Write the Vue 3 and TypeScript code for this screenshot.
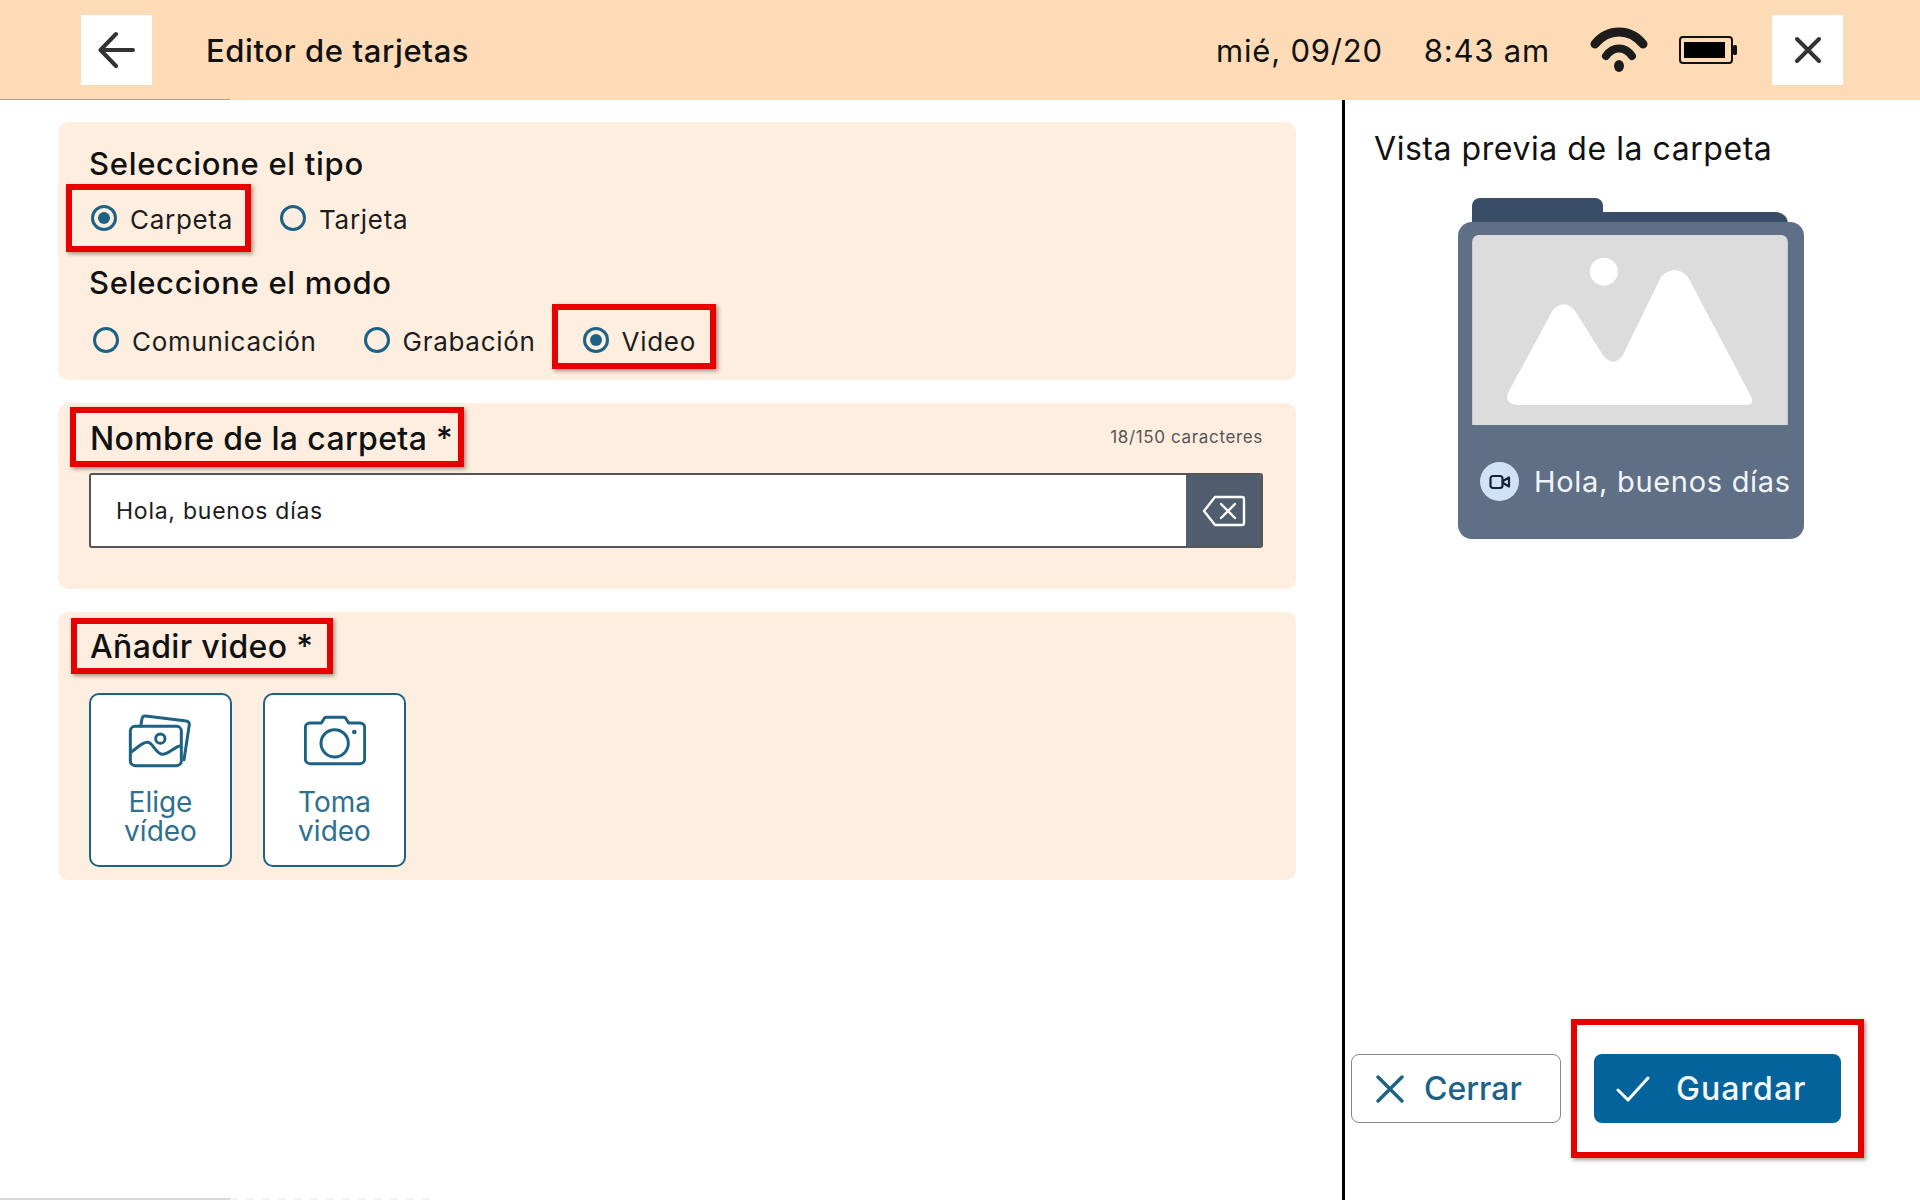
<template>
  <div class="screen">
    <header class="topbar">
      <button class="bar-btn back-btn" aria-label="Volver">
        <svg width="38" height="38" viewBox="0 0 38 38" fill="none" stroke="#333" stroke-width="4" stroke-linecap="round" stroke-linejoin="round">
          <path d="M35 19H3M18 3 2.5 19 18 35" />
        </svg>
      </button>
      <h1 class="bar-title">Editor de tarjetas</h1>
      <span class="bar-date">mié, 09/20</span>
      <span class="bar-time">8:43 am</span>
      <svg class="wifi" width="58" height="46" viewBox="0 0 58 46" fill="none" stroke="#1c1c1c" stroke-linecap="round">
        <path d="M5 17C18 1 40 1 53 17" stroke-width="9" />
        <path d="M16 29C23 19 35 19 42 29" stroke-width="8" />
        <ellipse cx="29" cy="39" rx="5" ry="6" fill="#1c1c1c" stroke="none" />
      </svg>
      <svg class="battery" width="59" height="28" viewBox="0 0 59 28">
        <rect x="1" y="1" width="52" height="26" rx="3" fill="none" stroke="#111" stroke-width="2" />
        <rect x="5" y="6" width="41" height="16" fill="#000" />
        <rect x="54" y="9" width="4" height="10" rx="1.5" fill="#111" />
      </svg>
      <button class="bar-btn close-btn" aria-label="Cerrar">
        <svg width="28" height="28" viewBox="0 0 28 28" fill="none" stroke="#333" stroke-width="4" stroke-linecap="round">
          <path d="M3 3 25 25M25 3 3 25" />
        </svg>
      </button>
    </header>

    <div class="content">
      <main class="editor">
        <section class="panel type-panel">
          <h2 class="panel-title">Seleccione el tipo</h2>
          <div class="radio-row first-row">
            <label v-for="opt in types" :key="opt.label" class="radio" :class="{ marked: opt.checked }">
              <span class="dot" :class="{ checked: opt.checked }"></span>
              <span class="radio-text">{{ opt.label }}</span>
            </label>
          </div>
          <h2 class="panel-title mode-title">Seleccione el modo</h2>
          <div class="radio-row second-row">
            <label v-for="opt in modes" :key="opt.label" class="radio" :class="{ marked: opt.checked }">
              <span class="dot" :class="{ checked: opt.checked }"></span>
              <span class="radio-text">{{ opt.label }}</span>
            </label>
          </div>
        </section>

        <section class="panel name-panel">
          <div class="name-head">
            <h2 class="field-title marked-title">Nombre de la carpeta *</h2>
            <span class="counter">18/150 caracteres</span>
          </div>
          <div class="name-input">
            <span class="input-text">Hola, buenos días</span>
            <button class="clear-btn" aria-label="Borrar">
              <svg width="44" height="32" viewBox="0 0 44 32" fill="none" stroke="#fff" stroke-width="2.4" stroke-linejoin="round" stroke-linecap="round">
                <path d="M13 2H40a2 2 0 0 1 2 2V28a2 2 0 0 1-2 2H13L2 16Z" />
                <path d="M19 9 33 23M33 9 19 23" />
              </svg>
            </button>
          </div>
        </section>

        <section class="panel video-panel">
          <h2 class="field-title marked-title video-title">Añadir video *</h2>
          <div class="tiles">
            <button class="tile">
              <svg width="65" height="55" viewBox="0 0 195 165" fill="none" stroke="#1d6283" stroke-width="9" stroke-linejoin="round" stroke-linecap="round">
                <rect x="7" y="40" width="153" height="118" rx="14" />
                <path d="M38 40 42 17a10 10 0 0 1 11-8L175 24a10 10 0 0 1 9 11L168 140" />
                <circle cx="97" cy="77" r="14" />
                <path d="M8 118C25 108 42 86 60 88 75 90 85 124 104 124 122 124 140 100 158 98" />
              </svg>
              <span class="tile-label">Elige<br />vídeo</span>
            </button>
            <button class="tile">
              <svg width="62" height="49" viewBox="0 0 186 147" fill="none" stroke="#1d6283" stroke-width="9" stroke-linejoin="round">
                <path d="M18 21H52L60 8a8 8 0 0 1 7-4H119a8 8 0 0 1 7 4L134 21H168a14 14 0 0 1 14 14V129a14 14 0 0 1-14 14H18A14 14 0 0 1 4 129V35A14 14 0 0 1 18 21Z" />
                <circle cx="92" cy="82" r="41" />
                <circle cx="151" cy="48" r="7" fill="#1d6283" stroke="none" />
              </svg>
              <span class="tile-label">Toma<br />video</span>
            </button>
          </div>
        </section>
      </main>

      <aside class="preview">
        <h2 class="preview-title">Vista previa de la carpeta</h2>
        <div class="folder">
          <div class="folder-back">
            <span class="folder-tab"></span>
          </div>
          <div class="folder-front">
            <svg class="folder-image" width="316" height="190" viewBox="398 375 947 570">
              <path d="M398 395a20 20 0 0 1 20-20H1325a20 20 0 0 1 20 20V945H398Z" fill="#dcdcdc" />
              <circle cx="793" cy="485" r="42" fill="#fff" />
              <path d="M505 850 640 600Q675 565 705 600L790 735Q822 775 850 735L965 500Q1005 460 1045 500L1235 860Q1245 885 1220 885H530Q495 880 505 850Z" fill="#fff" />
            </svg>
            <div class="folder-label">
              <span class="mode-badge">
                <svg width="22" height="16" viewBox="0 0 22 16" fill="none" stroke="#14233a" stroke-width="2.2" stroke-linejoin="round">
                  <rect x="1.5" y="2" width="12" height="12" rx="2.5" />
                  <path d="M14 7 20 3.5V12.5L14 9Z" />
                </svg>
              </span>
              <span class="folder-name">Hola, buenos días</span>
            </div>
          </div>
        </div>
        <div class="actions">
          <button class="action cancel">
            <svg width="28" height="28" viewBox="0 0 28 28" fill="none" stroke="#1b6286" stroke-width="3.4" stroke-linecap="round">
              <path d="M2 2 26 26M26 2 2 26" />
            </svg>
            Cerrar
          </button>
          <button class="action save">
            <svg class="check" width="34" height="26" viewBox="0 0 34 26" fill="none" stroke="#fff" stroke-width="3" stroke-linecap="round" stroke-linejoin="round">
              <path d="M2 14 12 24 32 2" />
            </svg>
            Guardar
          </button>
        </div>
      </aside>
    </div>

    <div class="bottom-edge">
      <span class="edge-solid"></span>
      <span class="edge-dashes"></span>
    </div>
  </div>
</template>

<script setup lang="ts">
interface RadioOption {
  label: string
  checked: boolean
}

const types: RadioOption[] = [
  { label: 'Carpeta', checked: true },
  { label: 'Tarjeta', checked: false },
]

const modes: RadioOption[] = [
  { label: 'Comunicación', checked: false },
  { label: 'Grabación', checked: false },
  { label: 'Video', checked: true },
]
</script>

<style>
html,
body {
  margin: 0;
  background: #fff;
}
</style>

<style scoped>
.screen {
  position: relative;
  width: 1920px;
  height: 1200px;
  overflow: hidden;
  background: #fff;
  color: #111;
  font-family: Inter, "Liberation Sans", sans-serif;
}

button {
  font-family: inherit;
  cursor: pointer;
}

h1,
h2 {
  margin: 0;
}

.topbar {
  position: relative;
  display: flex;
  align-items: center;
  height: 100px;
  padding: 0 77px 0 81px;
  background: #fddbb6;
  box-sizing: border-box;
}

.topbar::after {
  content: "";
  position: absolute;
  left: 0;
  bottom: 0;
  width: 230px;
  height: 1px;
  background: #a9a294;
}

.bar-btn {
  display: flex;
  align-items: center;
  justify-content: center;
  height: 70px;
  margin-bottom: 1px;
  padding: 0;
  border: none;
  background: #fff;
}

.back-btn {
  width: 71px;
}

.close-btn {
  width: 71px;
  margin-left: 34px;
}

.bar-title {
  margin-left: 54px;
  font-size: 31px;
  font-weight: 500;
  letter-spacing: 0.6px;
  white-space: nowrap;
}

.bar-date {
  margin-left: auto;
  font-size: 31px;
  letter-spacing: 0.8px;
  white-space: nowrap;
}

.bar-time {
  margin-left: 41px;
  font-size: 31px;
  letter-spacing: 0.8px;
  white-space: nowrap;
}

.wifi {
  margin-left: 40px;
}

.battery {
  margin-left: 31px;
}

.content {
  display: flex;
  height: 1100px;
}

.editor {
  display: flex;
  flex-direction: column;
  gap: 23px;
  width: 1342px;
  padding: 22px 46px 0 58px;
  box-sizing: border-box;
}

.panel {
  border-radius: 10px;
  background: #feeee0;
  padding: 0 33px 0 31px;
  box-sizing: border-box;
}

.type-panel {
  height: 258px;
  padding-top: 24px;
}

.panel-title {
  font-size: 31px;
  line-height: 36px;
  font-weight: 500;
  letter-spacing: 0.7px;
}

.radio-row {
  display: flex;
  gap: 47px;
  height: 36px;
}

.first-row {
  margin-top: 18px;
  padding-left: 2px;
}

.mode-title {
  margin-top: 29px;
}

.second-row {
  margin-top: 21px;
  padding-left: 4px;
}

.radio {
  position: relative;
  display: flex;
  align-items: center;
  gap: 13px;
  font-size: 26px;
  letter-spacing: 0.7px;
  white-space: nowrap;
  color: #1c1c1c;
}

.radio-text {
  margin-top: 2px;
}

.dot {
  display: flex;
  align-items: center;
  justify-content: center;
  width: 26px;
  height: 26px;
  border: 3px solid #1b6286;
  border-radius: 50%;
  box-sizing: border-box;
}

.dot.checked::before {
  content: "";
  width: 12px;
  height: 12px;
  border-radius: 50%;
  background: #1b6286;
}

.marked::after,
.marked-title::after {
  content: "";
  position: absolute;
  border: 6px solid #e60000;
  box-shadow: 2px 2px 4px rgba(60, 30, 20, 0.45);
  pointer-events: none;
}

.radio.marked::after {
  inset: -16px -18px -16px -25px;
}

.second-row .radio.marked::after {
  inset: -18px -20px -11px -31px;
}

.name-panel {
  height: 186px;
  padding-top: 16px;
}

.name-head {
  display: flex;
  align-items: center;
  justify-content: space-between;
  height: 40px;
}

.field-title {
  position: relative;
  font-size: 32px;
  line-height: 40px;
  font-weight: 500;
  letter-spacing: 0.35px;
  white-space: nowrap;
}

.marked-title {
  margin-left: 1px;
}

.marked-title::after {
  inset: -12px -11px -8px -20px;
}

.counter {
  margin-bottom: 4px;
  font-size: 17px;
  letter-spacing: 0.65px;
  color: #555;
}

.name-input {
  display: flex;
  align-items: center;
  justify-content: space-between;
  height: 75px;
  margin-top: 14px;
  padding-left: 25px;
  background: #fff;
  border: 2px solid #555;
  border-radius: 3px;
  box-sizing: border-box;
  overflow: hidden;
}

.input-text {
  font-size: 23px;
  letter-spacing: 0.75px;
  color: #1c1c1c;
}

.clear-btn {
  display: flex;
  align-items: center;
  justify-content: center;
  width: 75px;
  height: 100%;
  padding: 0;
  border: none;
  background: #505d6e;
}

.video-panel {
  height: 268px;
  padding-top: 15px;
}

.video-title {
  width: fit-content;
}

.video-title::after {
  inset: -9px -20px -7px -19px;
}

.tiles {
  display: flex;
  gap: 31px;
  margin-top: 26px;
}

.tile {
  display: flex;
  flex-direction: column;
  align-items: center;
  width: 143px;
  height: 174px;
  padding: 18px 0 0;
  border: 2px solid #1d6283;
  border-radius: 10px;
  background: #fff;
  box-sizing: border-box;
}

.tile svg {
  height: 55px;
}

.tile-label {
  margin-top: 20px;
  font-size: 28px;
  line-height: 29px;
  color: #2d7090;
}

.preview {
  display: flex;
  flex-direction: column;
  flex: 1;
  border-left: 3px solid #000;
  padding: 28px 0 0 29px;
  box-sizing: border-box;
}

.preview-title {
  font-size: 32px;
  line-height: 42px;
  font-weight: 400;
  letter-spacing: 0.55px;
  white-space: nowrap;
}

.folder {
  position: relative;
  width: 346px;
  margin: 28px 0 0 84px;
  padding-top: 24px;
}

.folder-back {
  position: absolute;
  top: 14px;
  left: 14px;
  width: 316px;
  height: 40px;
  border-radius: 12px 12px 0 0;
  background: #3a4d66;
}

.folder-tab {
  position: absolute;
  top: -14px;
  left: 0;
  width: 131px;
  height: 40px;
  border-radius: 8px 8px 0 0;
  background: #3a4d66;
}

.folder-front {
  position: relative;
  height: 317px;
  padding: 13px 14px 0;
  border-radius: 14px;
  background: #5f6f86;
  box-sizing: border-box;
}

.folder-image {
  display: block;
}

.folder-label {
  display: flex;
  align-items: center;
  gap: 15px;
  margin-top: 37px;
  margin-left: 8px;
}

.mode-badge {
  display: flex;
  flex: none;
  align-items: center;
  justify-content: center;
  width: 39px;
  height: 39px;
  border-radius: 50%;
  background: #cfe2f6;
}

.folder-name {
  font-size: 29px;
  letter-spacing: 0.7px;
  color: #f2f5f8;
  white-space: nowrap;
}

.actions {
  display: flex;
  gap: 33px;
  margin: auto 0 77px -23px;
}

.action {
  display: flex;
  align-items: center;
  height: 69px;
  font-size: 32px;
  font-weight: 500;
  border-radius: 8px;
  box-sizing: border-box;
}

.cancel {
  width: 210px;
  gap: 20px;
  padding: 0 0 0 24px;
  border: 1px solid #888;
  background: #fff;
  color: #1b6286;
}

.save {
  position: relative;
  width: 247px;
  gap: 26px;
  padding: 0 0 0 22px;
  border: none;
  letter-spacing: 1px;
  background: #04639b;
  color: #f4f8fb;
}

.save::after {
  content: "";
  position: absolute;
  inset: -35px -23px -35px -23px;
  border: 6px solid #e60000;
  box-shadow: 2px 2px 4px rgba(60, 30, 20, 0.45);
  pointer-events: none;
}

.bottom-edge {
  position: absolute;
  left: 0;
  bottom: 0;
  display: flex;
  width: 430px;
  height: 2px;
}

.edge-solid {
  width: 230px;
  background: #d8d8d8;
}

.edge-dashes {
  flex: 1;
  background: repeating-linear-gradient(90deg, #f3f3f3 0 8px, transparent 8px 16px);
}
</style>
